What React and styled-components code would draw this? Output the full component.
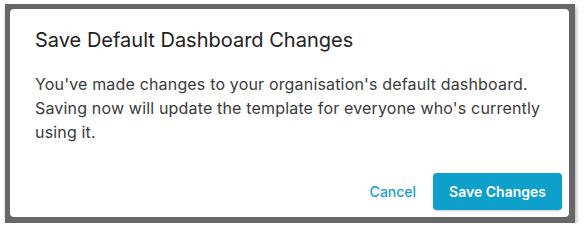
import React from "react";
import styled, { createGlobalStyle } from "styled-components";

const GlobalStyle = createGlobalStyle`
  html, body {
    margin: 0;
    padding: 0;
    background: #ffffff;
    font-family: Inter, "Noto Sans", sans-serif;
  }
`;

const Backdrop = styled.div`
  box-sizing: border-box;
  width: 570px;
  height: 219px;
  margin: 4px 0 0 5px;
  padding: 5px 6px 6px 5px;
  background: #676767;
  box-shadow: 1px 3px 4px rgba(0, 0, 0, 0.35);
`;

const Modal = styled.div`
  box-sizing: border-box;
  width: 559px;
  height: 208px;
  background: #ffffff;
  border-radius: 4px;
  display: flex;
  flex-direction: column;
`;

const Header = styled.h2`
  margin: 0;
  padding: 17px 25px 0;
  font-size: 20px;
  line-height: 28px;
  font-weight: 400;
  color: #222222;
`;

const Body = styled.p`
  margin: 0;
  padding: 18px 25px 0;
  font-size: 16px;
  line-height: 24px;
  letter-spacing: 0.17px;
  color: #3a3a3a;
  flex: 1;
`;

const Footer = styled.div`
  display: flex;
  justify-content: flex-end;
  align-items: center;
  gap: 1px;
  padding: 0 7px 7px 0;
`;

const Button = styled.button`
  font-family: Inter, "Noto Sans", sans-serif;
  font-size: 14px;
  font-weight: ${(p) => (p.$primary ? 600 : 500)};
  height: 37px;
  min-width: ${(p) => (p.$primary ? "128px" : "0")};
  padding: 0 16px;
  border: none;
  border-radius: 4px;
  cursor: pointer;
  background: ${(p) => (p.$primary ? "#0e9fcb" : "transparent")};
  color: ${(p) => (p.$primary ? "#ffffff" : "#199fcc")};
  box-shadow: ${(p) => (p.$primary ? "0 1px 2px rgba(0,0,0,0.2)" : "none")};
`;

export default function App() {
  return (
    <>
      <GlobalStyle />
      <Backdrop>
        <Modal>
          <Header>Save Default Dashboard Changes</Header>
          <Body>
            You've made changes to your organisation's default dashboard.
            Saving now will update the template for everyone who's currently
            using it.
          </Body>
          <Footer>
            <Button>Cancel</Button>
            <Button $primary>Save Changes</Button>
          </Footer>
        </Modal>
      </Backdrop>
    </>
  );
}
